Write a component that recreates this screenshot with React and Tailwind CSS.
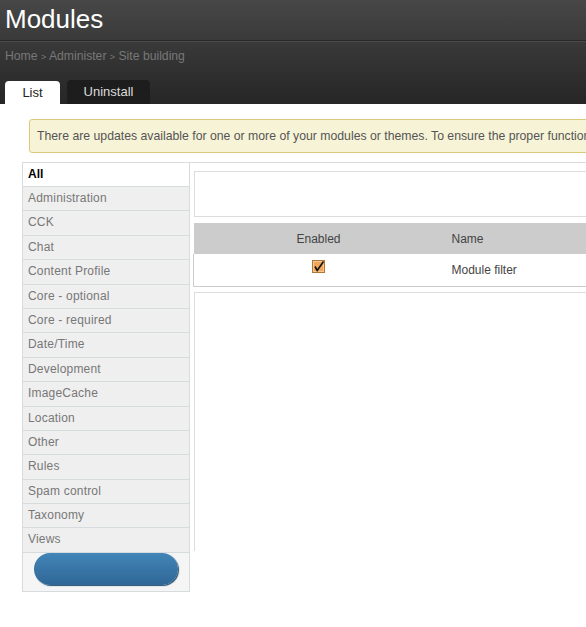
import React from 'react';

const categories = [
    'Administration',
    'CCK',
    'Chat',
    'Content Profile',
    'Core - optional',
    'Core - required',
    'Date/Time',
    'Development',
    'ImageCache',
    'Location',
    'Other',
    'Rules',
    'Spam control',
    'Taxonomy',
    'Views',
];

const CheckedBox = () => (
    <svg width="13" height="13" viewBox="0 0 13 13" className="block">
        <rect x="0.5" y="0.5" width="12" height="12" fill="#f2a65a" stroke="#b0763a" />
        <rect x="1.5" y="1.5" width="10" height="10" fill="none" stroke="#f8c890" strokeWidth="1" />
        <path d="M3 6.5 L5.2 10.5 L11.5 1.5" fill="none" stroke="#111" strokeWidth="1.6" />
    </svg>
);

const App = () => {
    return (
        <div className="w-full min-h-[627px] overflow-hidden bg-white font-['Liberation_Sans',Arial,sans-serif]">
            {/* header */}
            <div className="h-[104px] bg-gradient-to-b from-[#474747] to-[#262626] flex flex-col">
                <div className="h-[41px] px-[5px] pt-[1px] border-b border-[#272727] shadow-[0_1px_0_#4c4c4c]">
                    <h1 className="text-[26px] leading-[36px] text-white">Modules</h1>
                </div>
                <div className="px-[5px] pt-[7px] h-[38px] text-[12.2px] leading-[16px] text-[#787878] whitespace-nowrap">
                    Home <span className="text-[9px]">&gt;</span> Administer <span className="text-[9px]">&gt;</span> Site building
                </div>
                <div className="flex items-end gap-[7px] px-[5px] flex-1">
                    <div className="w-[55px] h-[23px] rounded-t-[4px] bg-white text-[#222] text-[13px] leading-[23px] text-center">List</div>
                    <div className="w-[83px] h-[24px] rounded-t-[4px] bg-[#1d1d1d] text-[#dcdcdc] text-[13px] leading-[24px] text-center">Uninstall</div>
                </div>
            </div>

            {/* messages */}
            <div className="pl-[29px] pt-[15px] whitespace-nowrap">
                <div className="w-[1000px] h-[34px] rounded-[3px] border border-[#ddc97a] bg-[#f7f3d6] pl-[7px] text-[12.25px] leading-[32px] text-[#555]">
                    There are updates available for one or more of your modules or themes. To ensure the proper functionality of your site, you should update as soon as possible.
                </div>
            </div>

            {/* sidebar + content */}
            <div className="ml-[22px] mt-[9px] w-[1000px] border-t border-[#dcdcdc] flex items-start">
                <div className="w-[168px] shrink-0 border-l border-r border-b border-[#d6dcde]">
                    <div className="h-[24px] pl-[5px] text-[12px] leading-[23px] font-bold text-black bg-white border-b border-[#d6dcde]">All</div>
                    {categories.map((c) => (
                        <div
                            key={c}
                            className="h-[24.4px] pl-[5px] text-[12px] leading-[23px] text-[#777] bg-[#efefef] border-b border-[#d6dcde] whitespace-nowrap tracking-[0.2px]"
                        >
                            {c}
                        </div>
                    ))}
                    <div className="h-[38px] bg-[#f5f5f5] pl-[11px]">
                        <div className="w-[144px] h-[32px] rounded-full bg-gradient-to-b from-[#4285b8] to-[#2f6796] shadow-[1px_1px_1px_#25506f]"></div>
                    </div>
                </div>

                <div className="flex-1 pl-[3px]">
                    <div className="ml-[1px] mt-[8px] h-[46px] border border-[#dddddd] bg-white"></div>
                    <table className="mt-[6px] w-full border-collapse text-[12px] text-[#444]">
                        <thead>
                            <tr className="bg-[#cccccc] h-[31px]">
                                <th className="w-[250px] font-normal text-center">Enabled</th>
                                <th className="font-normal text-left pl-[8px]">Name</th>
                            </tr>
                        </thead>
                        <tbody>
                            <tr className="h-[32px] border-l border-b border-[#cccccc]">
                                <td className="align-top pt-[6px]">
                                    <div className="flex justify-center pr-[1px]">
                                        <CheckedBox />
                                    </div>
                                </td>
                                <td className="pl-[8px] pt-[1px]">Module filter</td>
                            </tr>
                        </tbody>
                    </table>
                    <div className="ml-[1px] mt-[5px] h-[259px] border-l border-t border-[#dddddd]"></div>
                </div>
            </div>
        </div>
    );
};

export default App;
